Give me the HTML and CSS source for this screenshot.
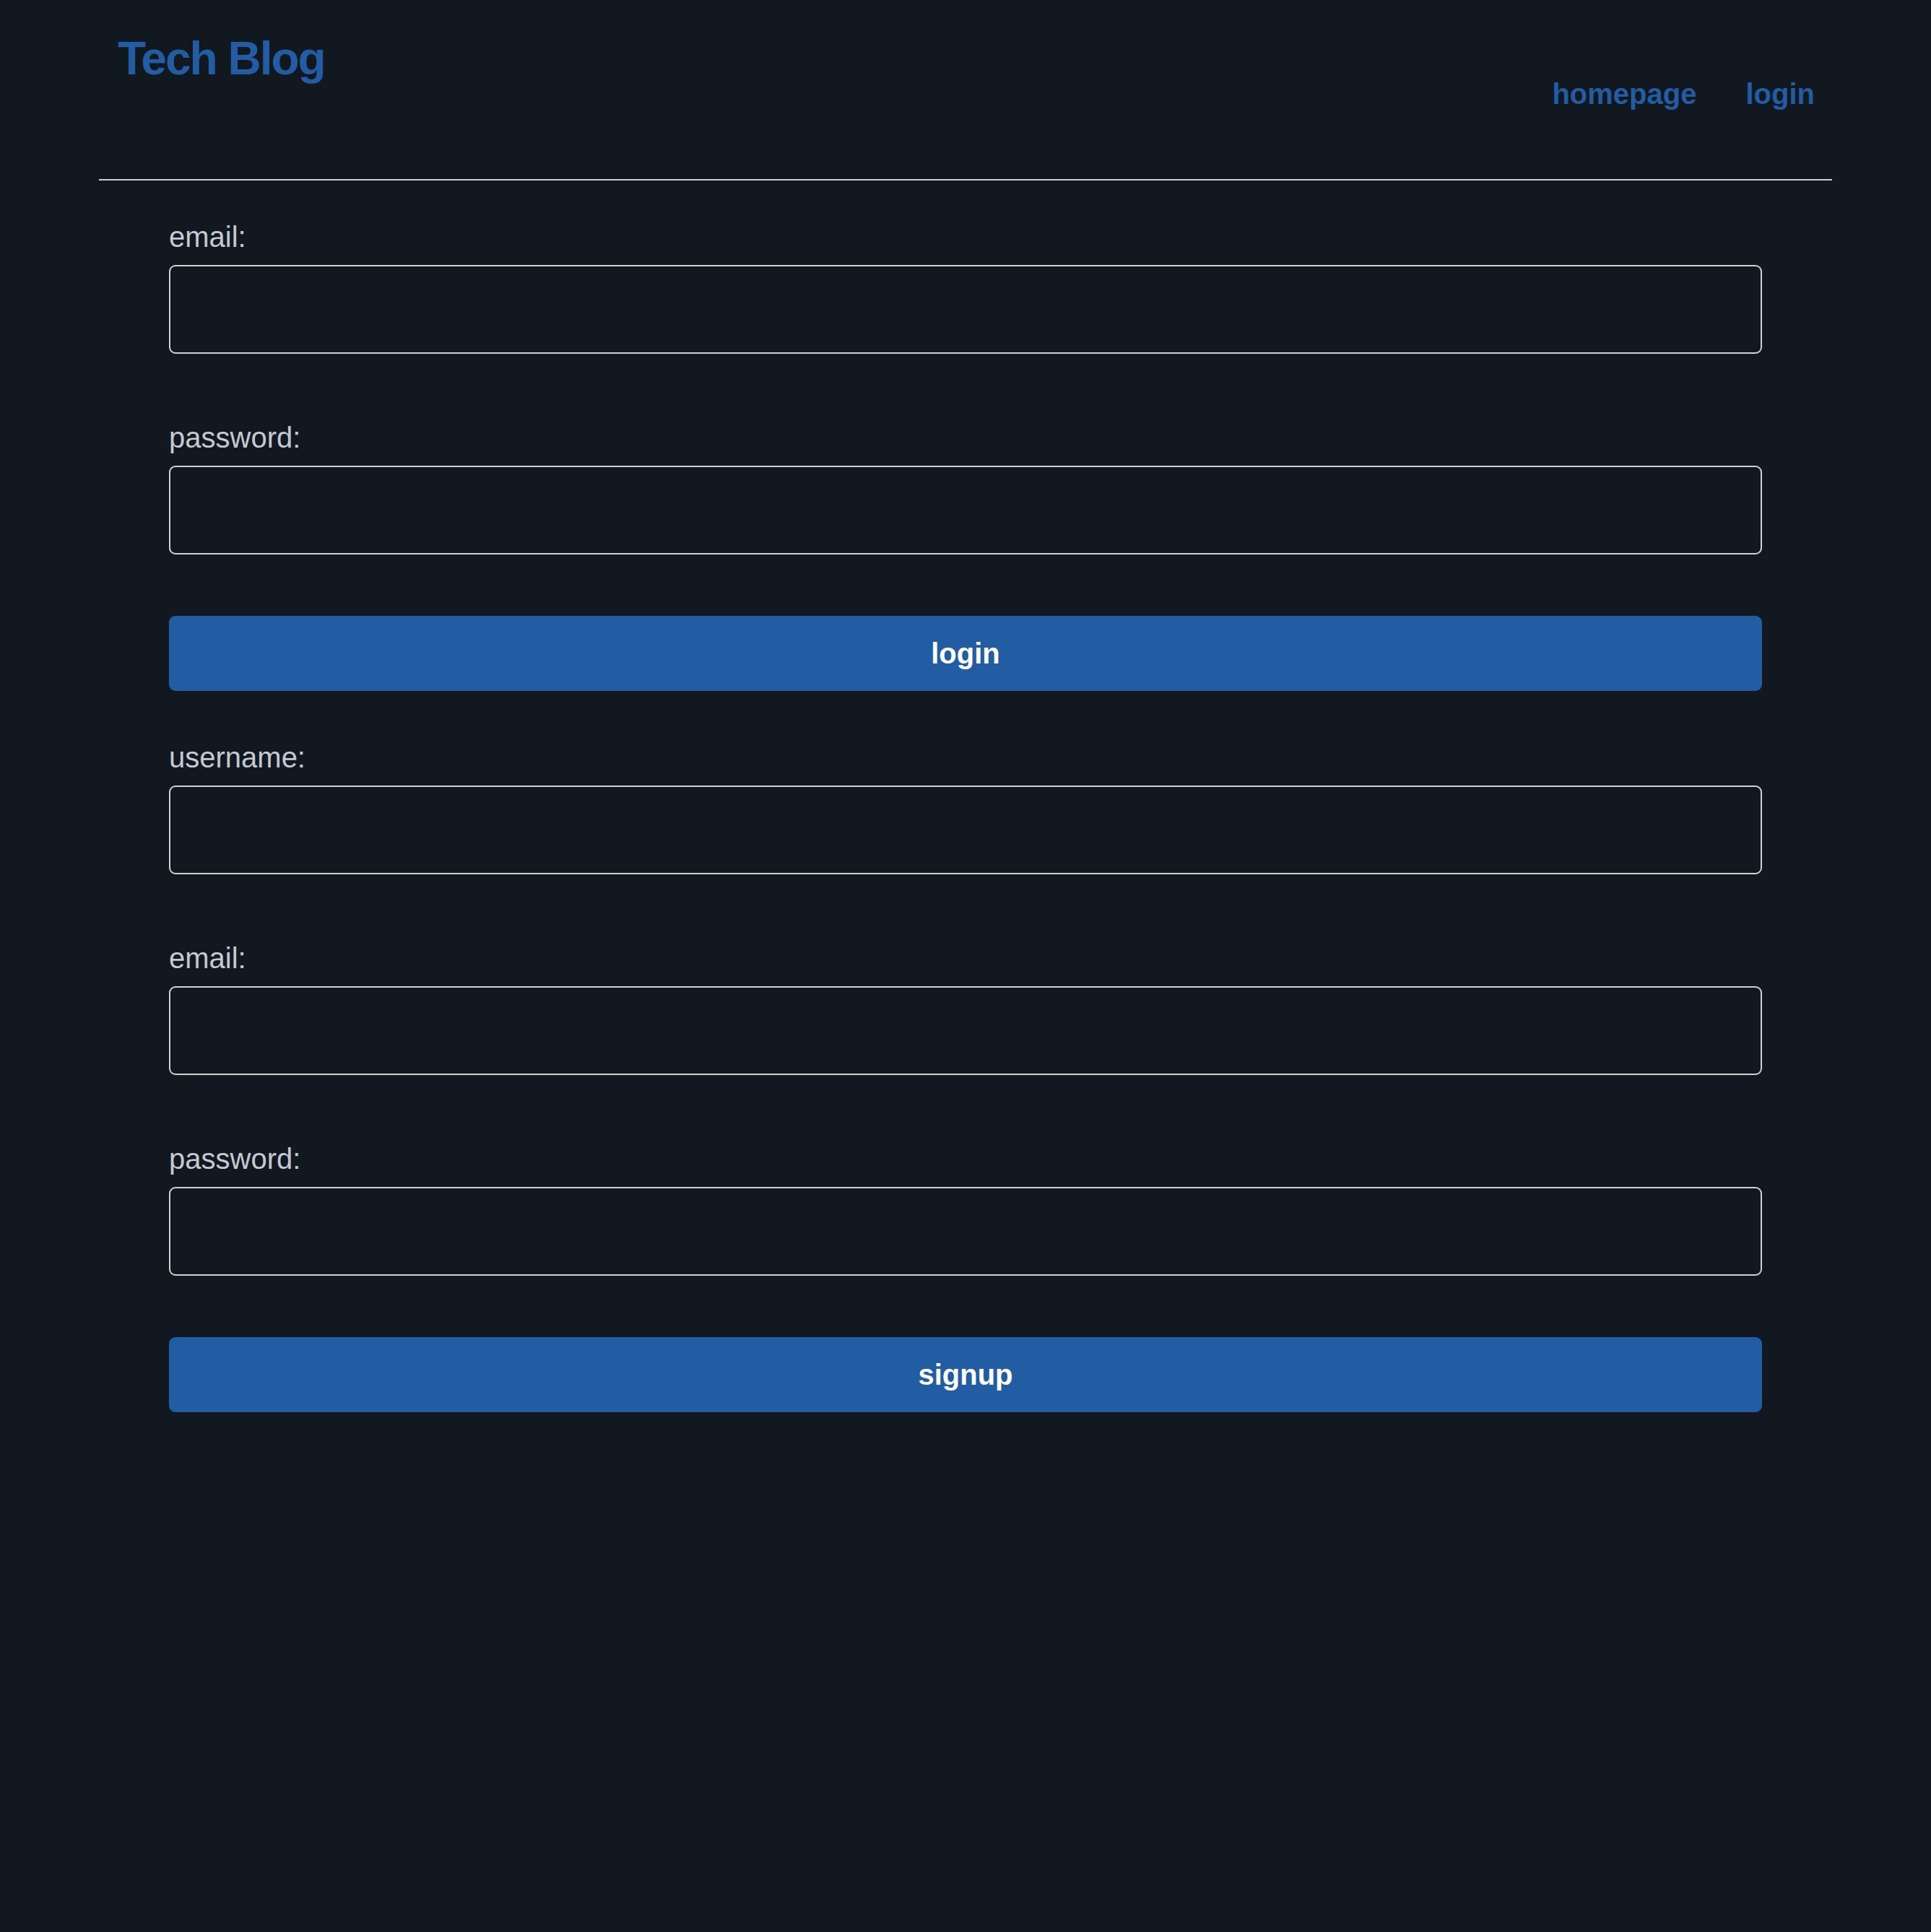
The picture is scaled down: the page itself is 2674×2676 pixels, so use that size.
FILE: index.html
```html
<!DOCTYPE html>
<html lang="en">
<head>
<meta charset="utf-8">
<title>Tech Blog</title>
<link rel="stylesheet" href="styles.css">
</head>
<body>
<div class="container">
  <header class="site-header">
    <h1 class="brand"><a href="#">Tech Blog</a></h1>
    <nav class="nav">
      <a href="#" class="nav-link">homepage</a>
      <a href="#" class="nav-link">login</a>
    </nav>
  </header>
  <main class="main">
    <form class="auth-form login-form">
      <div class="field">
        <label class="field-label" for="email-login">email:</label>
        <input class="field-input" type="email" id="email-login">
      </div>
      <div class="field field-last">
        <label class="field-label" for="password-login">password:</label>
        <input class="field-input" type="password" id="password-login">
      </div>
      <button class="btn" type="submit">login</button>
    </form>
    <form class="auth-form signup-form">
      <div class="field">
        <label class="field-label" for="username-signup">username:</label>
        <input class="field-input" type="text" id="username-signup">
      </div>
      <div class="field">
        <label class="field-label" for="email-signup">email:</label>
        <input class="field-input" type="email" id="email-signup">
      </div>
      <div class="field field-last">
        <label class="field-label" for="password-signup">password:</label>
        <input class="field-input" type="password" id="password-signup">
      </div>
      <button class="btn" type="submit">signup</button>
    </form>
  </main>
</div>
</body>
</html>
```
FILE: styles.css
```css
* { box-sizing: border-box; }

html, body {
  margin: 0;
  padding: 0;
  background: #12181f;
  min-height: 100%;
}

body {
  font-family: "Liberation Sans", Arial, Helvetica, sans-serif;
  color: #c3cad3;
}

.container {
  width: 2400px;
  margin: 0 auto;
}

.site-header {
  display: flex;
  justify-content: space-between;
  align-items: flex-start;
  height: 250px;
  padding: 0 24px 0 26px;
  border-bottom: 2px solid #cfcfcf;
}

.brand {
  margin: 44px 0 0;
  font-size: 64px;
  font-weight: 700;
  letter-spacing: -2px;
  line-height: normal;
}

.brand a {
  color: #225ca3;
  text-decoration: none;
}

.nav {
  display: flex;
  gap: 68px;
  margin-top: 108px;
}

.nav-link {
  color: #225ca3;
  text-decoration: none;
  font-size: 40px;
  font-weight: 700;
  line-height: normal;
}

.main {
  padding-top: 55px;
}

.auth-form {
  width: 2206px;
  margin: 0 auto;
  display: flex;
  flex-direction: column;
}

.login-form {
  margin-bottom: 69px;
}

.field {
  display: flex;
  flex-direction: column;
  margin-bottom: 93px;
}

.field-last {
  margin-bottom: 85px;
}

.field-label {
  font-size: 40px;
  line-height: 46px;
  margin-bottom: 16px;
  color: #c3cad3;
}

.field-input {
  width: 100%;
  height: 123px;
  border: 2px solid #d2d2d2;
  border-radius: 9px;
  background: transparent;
  color: #e6e6e6;
  font-family: inherit;
  font-size: 40px;
  padding: 0 20px;
  outline: none;
}

.btn {
  width: 100%;
  height: 104px;
  border: none;
  border-radius: 9px;
  background: #225ca3;
  color: #ffffff;
  font-family: inherit;
  font-size: 40px;
  font-weight: 700;
  line-height: 46px;
  cursor: pointer;
}
```
